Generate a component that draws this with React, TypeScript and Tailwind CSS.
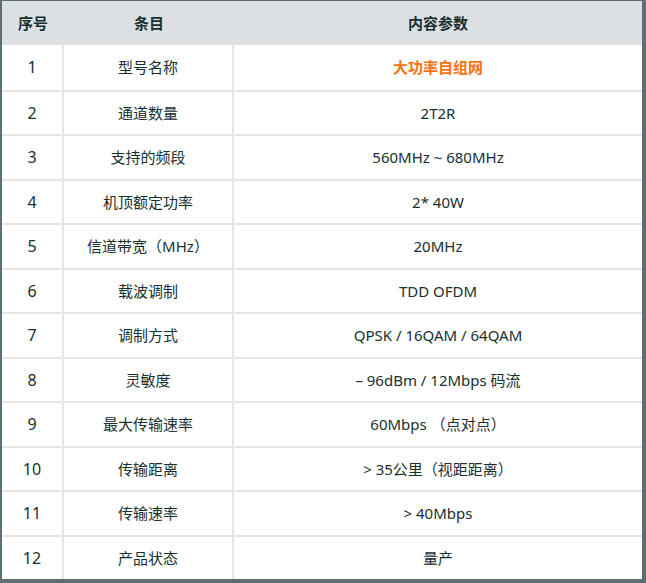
import { Fragment } from "react";

const rows: [string, string, string][] = [
  ["1", "型号名称", "大功率自组网"],
  ["2", "通道数量", "2T2R"],
  ["3", "支持的频段", "560MHz ~ 680MHz"],
  ["4", "机顶额定功率", "2* 40W"],
  ["5", "信道带宽（MHz）", "20MHz"],
  ["6", "载波调制", "TDD OFDM"],
  ["7", "调制方式", "QPSK / 16QAM / 64QAM"],
  ["8", "灵敏度", "– 96dBm / 12Mbps 码流"],
  ["9", "最大传输速率", "60Mbps （点对点）"],
  ["10", "传输距离", "> 35公里（视距距离）"],
  ["11", "传输速率", "> 40Mbps"],
  ["12", "产品状态", "量产"],
];

export default function App() {
  return (
    <div
      className="w-[646px] h-[583px] bg-[#5d6f74] pl-[2px] pt-[1px] pr-[4px] pb-[4px]"
      style={{ fontFamily: '"Noto Sans", "Noto Sans CJK SC", sans-serif' }}
    >
      <div className="h-full bg-white grid grid-cols-[62px_170px_1fr] grid-rows-[44px_repeat(12,1fr)] text-[15px] text-[#18302f]">
        {/* Header */}
        <div className="bg-[#dce0e2] flex items-center justify-center font-bold">序号</div>
        <div className="bg-[#dce0e2] flex items-center justify-center font-bold">条目</div>
        <div className="bg-[#dce0e2] flex items-center justify-center font-bold">内容参数</div>

        {rows.map(([no, item, value], i) => (
          <Fragment key={no}>
            <div
              className={`flex items-center justify-center border-r-2 border-[#e3e6e8] text-[16px] ${i > 0 ? "border-t-2" : ""}`}
            >
              {no}
            </div>
            <div
              className={`flex items-center justify-center border-r-2 border-[#e3e6e8] ${i > 0 ? "border-t-2" : ""}`}
            >
              {item}
            </div>
            <div
              className={`flex items-center justify-center border-[#e3e6e8] ${i > 0 ? "border-t-2" : ""} ${i === 0 ? "text-[#f7720f] font-bold" : ""}`}
            >
              {value}
            </div>
          </Fragment>
        ))}
      </div>
    </div>
  );
}
